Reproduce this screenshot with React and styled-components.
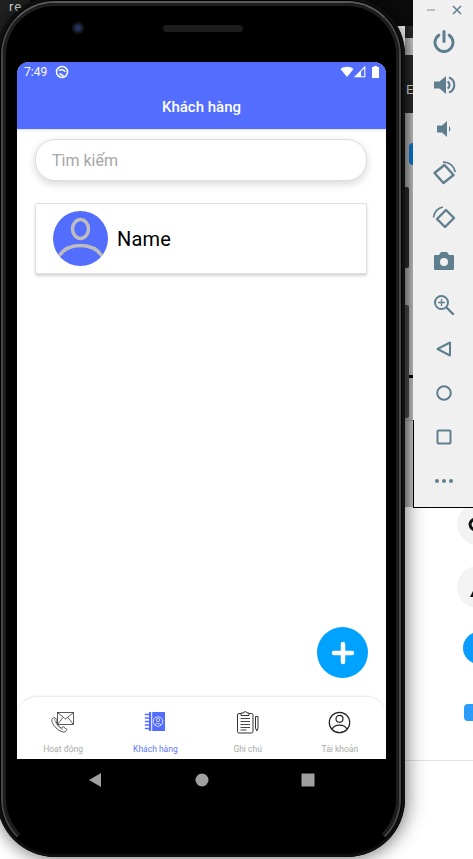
import React from "react";
import styled, { createGlobalStyle } from "styled-components";

const GlobalStyle = createGlobalStyle`
  html, body {
    margin: 0;
    padding: 0;
    background: #fff;
    font-family: Roboto, "Liberation Sans", sans-serif;
  }
`;

const Desktop = styled.div`
  position: relative;
  width: 473px;
  height: 859px;
  overflow: hidden;
  background: #fff;
`;

const TopBack = styled.div`
  position: absolute;
  left: 0;
  top: 0;
  width: 413px;
  height: 26px;
  background: #0c0c0c;
`;

const LeftBack = styled.div`
  position: absolute;
  left: 0;
  top: 0;
  width: 30px;
  height: 60px;
  background: #222;
`;

const CornerText = styled.span`
  position: absolute;
  left: 9px;
  top: 0;
  font-size: 13px;
  line-height: 13px;
  color: #ddd;
  letter-spacing: 1px;
`;

const BackStrip = styled.div`
  position: absolute;
  left: 405px;
  top: 26px;
  width: 8px;
  height: 481px;
  background:
    linear-gradient(90deg, rgba(0, 0, 0, 0.18), rgba(0, 0, 0, 0)),
    linear-gradient(
      #2a2a2a 0 12px,
      #c9c9c9 12px 29px,
      #2a2a2a 29px 87px,
      #c2c2c2 87px 394px,
      #a8a8a8 394px 395px,
      #c8c8c8 395px
    );
`;

const BackLabel = styled.span`
  position: absolute;
  left: 406px;
  top: 83px;
  font-size: 13px;
  line-height: 14px;
  color: #ddd;
`;

const SideKey = styled.div`
  position: absolute;
  left: 405px;
  top: ${(p) => p.$top}px;
  width: 4px;
  height: ${(p) => p.$h}px;
  background: ${(p) => p.$color};
  border-radius: 0 2px 2px 0;
`;

const StripTab = styled.div`
  position: absolute;
  left: 409px;
  top: 143px;
  width: 4px;
  height: 22px;
  border-radius: 4px 0 0 4px;
  background: #0a78d2;
`;

const StripTick = styled.div`
  position: absolute;
  left: 409px;
  top: 375px;
  width: 4px;
  height: 3px;
  background: #000;
`;

const BackDisc = styled.div`
  position: absolute;
  left: 457px;
  top: ${(p) => p.$y}px;
  width: 42px;
  height: 42px;
  border-radius: 50%;
  background: #f3f3f3;
`;

const BlueDot = styled.div`
  position: absolute;
  left: 463px;
  top: 632px;
  width: 32px;
  height: 32px;
  border-radius: 50%;
  background: #0a9bff;
`;

const BluePill = styled.div`
  position: absolute;
  left: 464px;
  top: 704px;
  width: 12px;
  height: 17px;
  border-radius: 4px;
  background: #2a9dfb;
`;

const Hairline = styled.div`
  position: absolute;
  left: 405px;
  right: 0;
  top: 760px;
  height: 1px;
  background: #e2e2e2;
`;

const Phone = styled.div`
  position: absolute;
  left: -3px;
  top: -3px;
  width: 408px;
  height: 860px;
  box-sizing: border-box;
  border-radius: 58px;
  padding: 65px 19px 0 20px;
  background: #000;
  display: flex;
  flex-direction: column;
  box-shadow:
    inset 0 0 0 3px #101010,
    4px 0 20px rgba(0, 0, 0, 0.32),
    -2px 2px 16px rgba(0, 0, 0, 0.3);

  &::before {
    content: "";
    position: absolute;
    inset: 4px;
    border-radius: 54px;
    border: 2px solid;
    border-color: #5a5a5a #484848 transparent #484848;
  }

  &::after {
    content: "";
    position: absolute;
    inset: 6px;
    border-radius: 52px;
    border: 3px solid;
    border-color: #1d1d1d #1d1d1d transparent #1d1d1d;
  }
`;

const Camera = styled.div`
  position: absolute;
  left: 75px;
  top: 25px;
  width: 12px;
  height: 12px;
  border-radius: 50%;
  background: radial-gradient(circle, #22345f 0 22%, #12141a 55%);
`;

const Speaker = styled.div`
  position: absolute;
  left: 166px;
  top: 28px;
  width: 80px;
  height: 7px;
  border-radius: 4px;
  background: #1c1c1c;
`;

const Screen = styled.div`
  position: relative;
  height: 697px;
  background: #fff;
  border-radius: 12px 12px 0 0;
  overflow: hidden;
  display: flex;
  flex-direction: column;
`;

const AppBar = styled.div`
  background: #536dfe;
  height: 67px;
  flex: none;
  color: #fff;
  box-shadow: 0 1px 2px rgba(83, 109, 254, 0.25);
`;

const StatusBar = styled.div`
  height: 20px;
  padding: 0 5px 0 7px;
  display: flex;
  align-items: center;
  gap: 8px;
  font-size: 12px;
`;

const StatusRight = styled.div`
  margin-left: auto;
  display: flex;
  align-items: center;
`;

const Title = styled.div`
  text-align: center;
  font-size: 15px;
  font-weight: 500;
  line-height: 18px;
  margin-top: 16px;
`;

const Content = styled.div`
  flex: 1;
  padding: 10px 19px 0 18px;
  display: flex;
  flex-direction: column;
  gap: 22px;
`;

const SearchBox = styled.div`
  height: 42px;
  box-sizing: border-box;
  border: 1px solid #dcdcdc;
  border-radius: 20px;
  padding: 0 16px;
  display: flex;
  align-items: center;
  background: #fff;
  color: #a6a6a6;
  font-size: 16px;
  box-shadow: 0 3px 8px rgba(0, 0, 0, 0.16);
`;

const CustomerCard = styled.div`
  height: 71px;
  box-sizing: border-box;
  border: 1px solid #e0e0e0;
  border-radius: 2px;
  padding: 0 17px;
  display: flex;
  align-items: center;
  gap: 9px;
  background: #fff;
  box-shadow: 0 2px 3px rgba(0, 0, 0, 0.18);
`;

const Avatar = styled.div`
  width: 55px;
  height: 55px;
  border-radius: 50%;
  background: #536dfe;
  overflow: hidden;
  flex: none;
`;

const CustomerName = styled.span`
  font-size: 20px;
  letter-spacing: 0.2px;
  color: #000;
`;

const Fab = styled.div`
  position: absolute;
  left: 300px;
  top: 565px;
  width: 51px;
  height: 51px;
  border-radius: 50%;
  background: #00a2ff;
  display: flex;
  align-items: center;
  justify-content: center;
`;

const TabBar = styled.div`
  height: 63px;
  flex: none;
  box-sizing: border-box;
  display: grid;
  grid-template-columns: repeat(4, 1fr);
  background: #fff;
  border-top: 1px solid #ececec;
  border-radius: 20px 20px 0 0;
  box-shadow: 0 -1px 2px rgba(0, 0, 0, 0.04);
`;

const Tab = styled.div`
  display: flex;
  flex-direction: column;
  align-items: center;
  padding-top: 13px;
  color: ${(p) => (p.$active ? "#5f78ff" : "#aaaaaa")};
`;

const TabLabel = styled.span`
  margin-top: 6px;
  font-size: 8.5px;
  line-height: 11px;
`;

const NavBar = styled.div`
  flex: 1;
  display: grid;
  grid-template-columns: repeat(3, 106px);
  justify-content: center;
  justify-items: center;
  padding-top: 14px;
`;

const Panel = styled.div`
  position: absolute;
  left: 413px;
  top: 0;
  width: 60px;
  height: 508px;
  box-sizing: border-box;
  background: #f0f0f0;
  border-bottom: 1px solid #000;
  display: flex;
  flex-direction: column;
  align-items: center;
  color: #5f7f8f;

  &::before {
    content: "";
    position: absolute;
    left: 0;
    top: 420px;
    bottom: 0;
    width: 1px;
    background: #000;
  }
`;

const PanelTop = styled.div`
  height: 19px;
  width: 100%;
  box-sizing: border-box;
  padding: 0 11px 0 13px;
  display: flex;
  align-items: center;
  justify-content: space-between;
  flex: none;
`;

const PanelButton = styled.div`
  height: 44px;
  width: 100%;
  padding-left: 1px;
  box-sizing: border-box;
  display: flex;
  align-items: center;
  justify-content: center;
  flex: none;
`;

const Ico = ({ size = 24, w, h, children, ...rest }) => (
  <svg width={w || size} height={h || size} viewBox={`0 0 ${w || size} ${h || size}`} fill="none" {...rest}>
    {children}
  </svg>
);

const panelIcons = [
  <Ico key="power" stroke="currentColor" strokeWidth="3" strokeLinecap="round">
    <path d="M12 2.5v10" />
    <path d="M6.8 6.2a9 9 0 1 0 10.4 0" />
  </Ico>,
  <Ico key="up">
    <path d="M2 8.500h5.500L14 3v18l-6.500-5.500H2z" fill="currentColor" />
    <path d="M17 4.500a8 8 0 0 1 0 15" stroke="currentColor" strokeWidth="2.200" />
    <path d="M15.500 8.500a4 4 0 0 1 0 7" stroke="currentColor" strokeWidth="2.200" />
  </Ico>,
  <Ico key="down">
    <path d="M5 8.500h5L15 4v16l-5-4.500H5z" fill="currentColor" />
    <path d="M17 9a4 4 0 0 1 0 6z" fill="currentColor" />
  </Ico>,
  <Ico key="rotl" stroke="currentColor" strokeWidth="2.400" strokeLinejoin="round">
    <path d="M2.500 12L12.500 4l9 10-10 8z" />
    <path d="M11 1.200A11.500 11.500 0 0 1 23.200 11" strokeWidth="1.700" />
  </Ico>,
  <Ico key="rotr" stroke="currentColor" strokeWidth="2.400" strokeLinejoin="round">
    <path d="M5 14l9-9 8 8-9 9z" />
    <path d="M1.500 12.500A11.500 11.500 0 0 1 11 2" strokeWidth="1.700" />
  </Ico>,
  <Ico key="cam">
    <path d="M2 7a1 1 0 0 1 1-1h4l2-3h6l2 3h4a1 1 0 0 1 1 1v13a1 1 0 0 1-1 1H3a1 1 0 0 1-1-1z" fill="currentColor" />
    <circle cx="12" cy="13" r="4" fill="#f0f0f0" />
  </Ico>,
  <Ico key="zoom" stroke="currentColor" strokeWidth="2" strokeLinecap="round">
    <circle cx="9.500" cy="9.500" r="6.500" />
    <path d="M14.500 14.500l6.500 6.500" strokeWidth="2.400" />
    <path d="M9.500 6.500v6M6.500 9.500h6" strokeWidth="1.300" />
  </Ico>,
  <Ico key="back" stroke="currentColor" strokeWidth="2" strokeLinejoin="round">
    <path d="M5.500 12L18 5.500v13z" />
  </Ico>,
  <Ico key="circle" stroke="currentColor" strokeWidth="2">
    <circle cx="12" cy="12" r="6.800" />
  </Ico>,
  <Ico key="square" stroke="currentColor" strokeWidth="2" strokeLinejoin="round">
    <rect x="5.500" y="5.500" width="13" height="13" rx="1" />
  </Ico>,
  <Ico key="more">
    <circle cx="5" cy="12" r="2" fill="currentColor" />
    <circle cx="12" cy="12" r="2" fill="currentColor" />
    <circle cx="19" cy="12" r="2" fill="currentColor" />
  </Ico>,
];

const ActivityIcon = () => (
  <Ico size={28} stroke="#333" strokeWidth="0.8">
    <rect x="8.500" y="2.500" width="16" height="12" />
    <path d="M8.500 2.500l8 6.500 8-6.500M8.500 14.500l5.500-7M24.500 14.500l-5.500-7" />
    <path d="M5 7.500c-2 1-2.800 2.500-1.800 4.800 1.400 3.600 5.400 8.200 10 9.500 2.300.7 4.200-.5 4.800-2.300l-3.800-2.800-2 1.400c-2-1-4.600-4-5.200-6.800l1.800-1.400z" fill="#fff" />
    <path d="M5.500 9c.2 2.800 3.800 8.500 8.500 10.500" strokeWidth=".5" />
  </Ico>
);

const ContactsIcon = () => (
  <Ico size={28}>
    <rect x="8" y="2" width="16" height="19" fill="#536dfe" />
    <rect x="10.200" y="2" width="1" height="19" fill="#fff" />
    <path d="M4.500 4.500h3.500M4.500 8h3.500M4.500 11.500h3.500M4.500 15h3.500M4.500 18.500h3.500" stroke="#536dfe" strokeWidth="1.600" strokeLinecap="round" />
    <circle cx="17" cy="11.500" r="4.800" stroke="#d9deff" strokeWidth="1" />
    <circle cx="17" cy="10" r="1.700" stroke="#d9deff" strokeWidth=".9" />
    <path d="M14 15c1-2 5-2 6 0" stroke="#d9deff" strokeWidth=".9" />
  </Ico>
);

const NotesIcon = () => (
  <Ico size={28} stroke="#333" strokeWidth="1">
    <path d="M7 3.500H5A1.500 1.500 0 0 0 3.500 5v16.500A1.500 1.500 0 0 0 5 23h12.500a1.500 1.500 0 0 0 1.500-1.500V5a1.500 1.500 0 0 0-1.500-1.500H15" />
    <path d="M7 5.500V3h2.500a1.800 1.800 0 0 1 3.500 0H15v2.500z" />
    <path d="M6.500 8.500h9.500M6.500 11.500h9.500M6.500 14.500h9.500M6.500 17.500h9.500M6.500 20h6" strokeWidth=".9" />
    <path d="M21.500 6.500h2.500V18L22.800 21 21.500 18z" />
  </Ico>
);

const AccountIcon = () => (
  <Ico size={28} stroke="#222" strokeWidth="1.200">
    <circle cx="13.500" cy="12.500" r="10.200" />
    <circle cx="13.500" cy="8.800" r="3.500" />
    <path d="M6 19.500c2-5.800 13-5.800 15 0" />
  </Ico>
);

const tabs = [
  { label: "Hoạt động", icon: <ActivityIcon /> },
  { label: "Khách hàng", icon: <ContactsIcon />, active: true },
  { label: "Ghi chú", icon: <NotesIcon /> },
  { label: "Tài khoản", icon: <AccountIcon /> },
];

function App() {
  return (
    <>
      <GlobalStyle />
      <Desktop>
        <TopBack />
        <LeftBack />
        <CornerText>re</CornerText>
        <BackStrip />
        <BackLabel>E</BackLabel>
        <SideKey $top={187} $h={81} $color="#2b2b2b" />
        <SideKey $top={305} $h={113} $color="#4a4a4a" />
        <StripTab />
        <StripTick />
        <BackDisc $y={503}>
          <svg width="18" height="42" viewBox="0 0 18 42" fill="none" stroke="#111" strokeWidth="3">
            <path d="M18 16a6.500 6.500 0 0 0-5 5 6.500 6.500 0 0 0 5 6" />
          </svg>
        </BackDisc>
        <BackDisc $y={566}>
          <svg width="18" height="42" viewBox="0 0 18 42">
            <path d="M18 21L13 31h5z" fill="#111" />
          </svg>
        </BackDisc>
        <BlueDot />
        <BluePill />
        <Hairline />

        <Phone>
          <Camera />
          <Speaker />
          <Screen>
            <AppBar>
              <StatusBar>
                <span>7:49</span>
                <Ico size={14} stroke="#fff" strokeWidth="1.500">
                  <circle cx="7" cy="7" r="5.500" />
                  <path d="M4 5.500c2-1.500 5-1 6 1.500M4.500 8.500l4 2.500" />
                </Ico>
                <StatusRight>
                  <Ico w={14} h={12}>
                    <path d="M.5 3C4 0 10 0 13.500 3L7 11z" fill="#fff" />
                  </Ico>
                  <Ico w={12} h={12}>
                    <path d="M1 10.800L10.800 1v9.800z" stroke="#fff" strokeWidth="1.100" />
                    <path d="M1 11L7 5v6z" fill="#fff" />
                  </Ico>
                  <Ico w={15} h={12}>
                    <path d="M8 0h3v1h2v11H6V1h2z" fill="#fff" />
                  </Ico>
                </StatusRight>
              </StatusBar>
              <Title>Khách hàng</Title>
            </AppBar>

            <Content>
              <SearchBox>Tìm kiếm</SearchBox>
              <CustomerCard>
                <Avatar>
                  <svg width="55" height="55" viewBox="0 0 55 55" fill="none" stroke="#bdbdbd" strokeWidth="3.500">
                    <ellipse cx="27.500" cy="18" rx="8" ry="9.500" />
                    <path d="M6 45c9-14 34-14 43 0" />
                  </svg>
                </Avatar>
                <CustomerName>Name</CustomerName>
              </CustomerCard>
            </Content>

            <Fab>
              <svg width="24" height="24" viewBox="0 0 24 24" stroke="#fff" strokeWidth="4.500" strokeLinecap="round">
                <path d="M12 3v18M3 12h18" />
              </svg>
            </Fab>

            <TabBar>
              {tabs.map((t) => (
                <Tab key={t.label} $active={t.active}>
                  {t.icon}
                  <TabLabel>{t.label}</TabLabel>
                </Tab>
              ))}
            </TabBar>
          </Screen>

          <NavBar>
            <svg width="14" height="14" viewBox="0 0 14 14"><path d="M12 0v14L0 7z" fill="#a0a0a0" /></svg>
            <svg width="14" height="14" viewBox="0 0 14 14"><circle cx="7" cy="7" r="6.500" fill="#a0a0a0" /></svg>
            <svg width="14" height="14" viewBox="0 0 14 14"><rect x=".5" y=".5" width="13" height="13" fill="#a0a0a0" /></svg>
          </NavBar>
        </Phone>

        <Panel>
          <PanelTop>
            <svg width="10" height="10" viewBox="0 0 10 10" stroke="#9fb0b9" strokeWidth="1.500"><path d="M1 5h8" /></svg>
            <svg width="10" height="10" viewBox="0 0 10 10" stroke="#5f7f8f" strokeWidth="1.500"><path d="M1 1l8 8M9 1l-8 8" /></svg>
          </PanelTop>
          {panelIcons.map((icon) => (
            <PanelButton key={icon.key}>{icon}</PanelButton>
          ))}
        </Panel>
      </Desktop>
    </>
  );
}

export default App;
